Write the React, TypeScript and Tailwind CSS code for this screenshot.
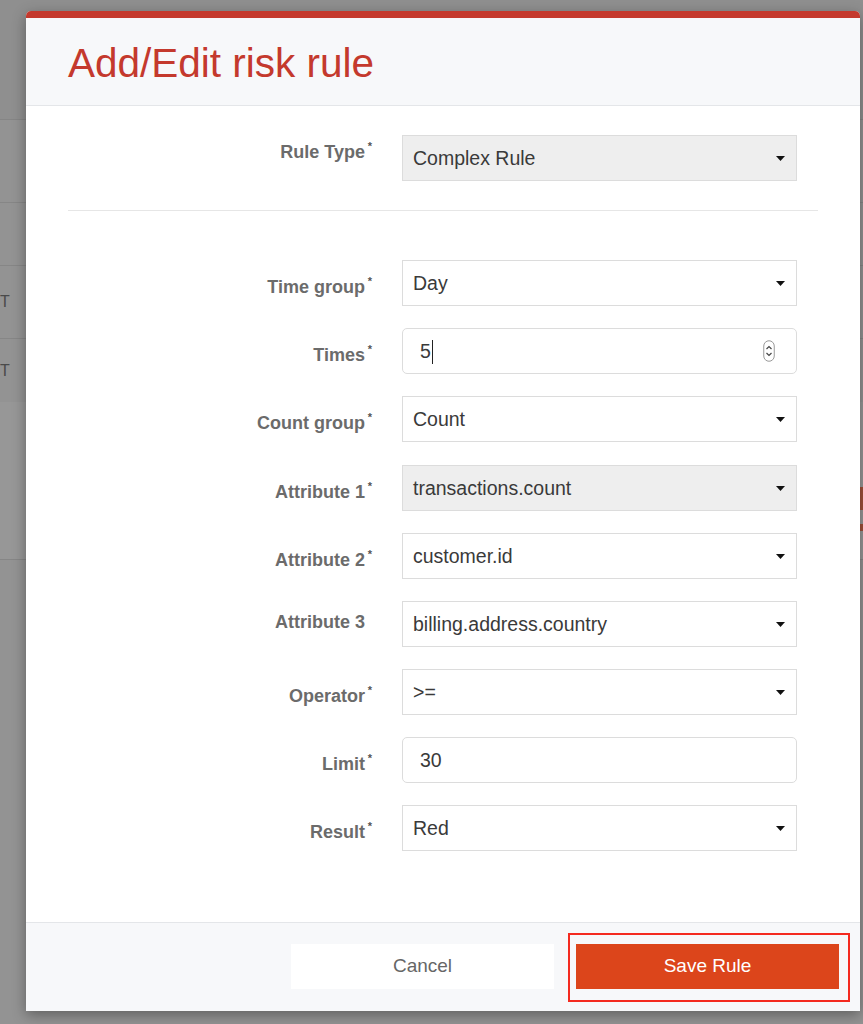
import React from "react";

const font = { fontFamily: '"Liberation Sans", Arial, Helvetica, sans-serif' };

function Caret() {
  return (
    <svg width="9" height="5" viewBox="0 0 9 5" className="shrink-0">
      <path d="M0 0 L9 0 L4.5 5 Z" fill="#111" />
    </svg>
  );
}

function Spinner() {
  return (
    <svg width="12" height="22" viewBox="0 0 12 22" className="shrink-0">
      <rect x="0.75" y="0.75" width="10.5" height="20.5" rx="5.25" fill="none" stroke="#9a9a9a" strokeWidth="1" />
      <path d="M3.5 9 L6 6.5 L8.5 9" fill="none" stroke="#444" strokeWidth="1.2" />
      <path d="M3.5 13 L6 15.5 L8.5 13" fill="none" stroke="#444" strokeWidth="1.2" />
    </svg>
  );
}

function Label({ text, required = true, top }: { text: string; required?: boolean; top: string }) {
  return (
    <div className={`flex w-[297px] shrink-0 justify-end ${top}`}>
      <span className="relative text-[18px] font-bold leading-[26px] text-[#6b6b6b]">
        {text}
        {required && (
          <span className="absolute -right-[7px] -top-[6px] text-[11px] font-bold text-[#555]">*</span>
        )}
      </span>
    </div>
  );
}

function Select({ value, disabled = false }: { value: string; disabled?: boolean }) {
  return (
    <div
      className={`flex h-[46px] w-[395px] items-center justify-between border border-[#dcdcdc] pl-[10px] pr-[11px] text-[19.5px] text-[#3a3a3a] ${
        disabled ? "bg-[#eeeeee]" : "bg-white"
      }`}
    >
      <span className="pt-[1px]">{value}</span>
      <Caret />
    </div>
  );
}

function Input({ value, cursor = false, spinner = false }: { value: string; cursor?: boolean; spinner?: boolean }) {
  return (
    <div className="flex h-[46px] w-[395px] items-center justify-between rounded-[5px] border border-[#dcdcdc] bg-white pl-[17px] pr-[21px] text-[19.5px] text-[#3a3a3a]">
      <span className="flex items-center pt-[1px]">
        {value}
        {cursor && <span className="ml-[1px] inline-block h-[24px] w-[1px] bg-[#222]" />}
      </span>
      {spinner && <Spinner />}
    </div>
  );
}

function Row({
  label,
  required = true,
  top = "pt-[14px]",
  className = "",
  children,
}: {
  label: string;
  required?: boolean;
  top?: string;
  className?: string;
  children: React.ReactNode;
}) {
  return (
    <div className={`flex gap-[37px] ${className}`}>
      <Label text={label} required={required} top={top} />
      {children}
    </div>
  );
}

function Backdrop() {
  return (
    <div className="flex flex-col">
      <div className="h-[120px] border-b border-[#858585] bg-[#8f8f8f]" />
      <div className="h-[83px] border-b border-[#868686] bg-[#939393]" />
      <div className="h-[63px] border-b border-[#868686] bg-[#939393]" />
      <div className="flex h-[73px] items-center border-b border-[#868686] bg-[#939393] text-[16px] text-[#4a4a4a]">
        <span>T</span>
      </div>
      <div className="flex h-[63px] items-center bg-[#939393] text-[16px] text-[#4a4a4a]">
        <span>T</span>
      </div>
      <div className="flex h-[158px] items-start justify-end border-b border-[#868686] bg-[#979797] pt-[85px]">
        <div className="flex flex-col gap-[14px]">
          <div className="h-[23px] w-[4px] bg-[#a0503a]" />
          <div className="h-[7px] w-[4px] bg-[#a0503a]" />
        </div>
      </div>
      <div className="h-[464px] bg-[#939393]" />
    </div>
  );
}

export default function App() {
  return (
    <div className="relative h-[1024px] w-full overflow-hidden bg-[#939393]" style={font}>
      <Backdrop />
      <div className="absolute left-[26px] top-[11px] w-[834px] rounded-t-[5px] bg-white shadow-[0_4px_14px_rgba(0,0,0,0.35)]">
        <div className="h-[7px] rounded-t-[5px] bg-[#c4392d]" />
        <div className="h-[88px] border-b border-[#e4e6e9] bg-[#f7f8fa] pl-[42px] pt-[25px]">
          <h1 className="text-[40.5px] font-normal leading-none text-[#c4392d]">Add/Edit risk rule</h1>
        </div>
        <div className="px-[42px] pb-[71px] pt-[29px]">
          <Row label="Rule Type" top="pt-[4px]">
            <Select value="Complex Rule" disabled />
          </Row>
          <div className="mb-[49px] mt-[29px] h-[1px] bg-[#e6e6e6]" />
          <div className="flex flex-col gap-[22px]">
            <Row label="Time group">
              <Select value="Day" />
            </Row>
            <Row label="Times">
              <Input value="5" cursor spinner />
            </Row>
            <Row label="Count group">
              <Select value="Count" />
            </Row>
            <Row label="Attribute 1" className="mt-[1px]">
              <Select value="transactions.count" disabled />
            </Row>
            <Row label="Attribute 2">
              <Select value="customer.id" />
            </Row>
            <Row label="Attribute 3" required={false} top="pt-[8px]">
              <Select value="billing.address.country" />
            </Row>
            <Row label="Operator">
              <Select value=">=" />
            </Row>
            <Row label="Limit">
              <Input value="30" />
            </Row>
            <Row label="Result">
              <Select value="Red" />
            </Row>
          </div>
        </div>
        <div className="flex h-[89px] items-start justify-end gap-[22px] border-t border-[#e4e6e9] bg-[#f7f8fa] pr-[21px] pt-[21px]">
          <button className="h-[45px] w-[263px] bg-white text-[19px] text-[#666]">Cancel</button>
          <div className="relative">
            <button className="h-[45px] w-[263px] bg-[#dc451b] text-[19px] font-normal text-white">Save Rule</button>
            <div className="pointer-events-none absolute -bottom-[13px] -left-[8px] -right-[11px] -top-[11px] border-2 border-[#f42a1f]" />
          </div>
        </div>
      </div>
    </div>
  );
}
